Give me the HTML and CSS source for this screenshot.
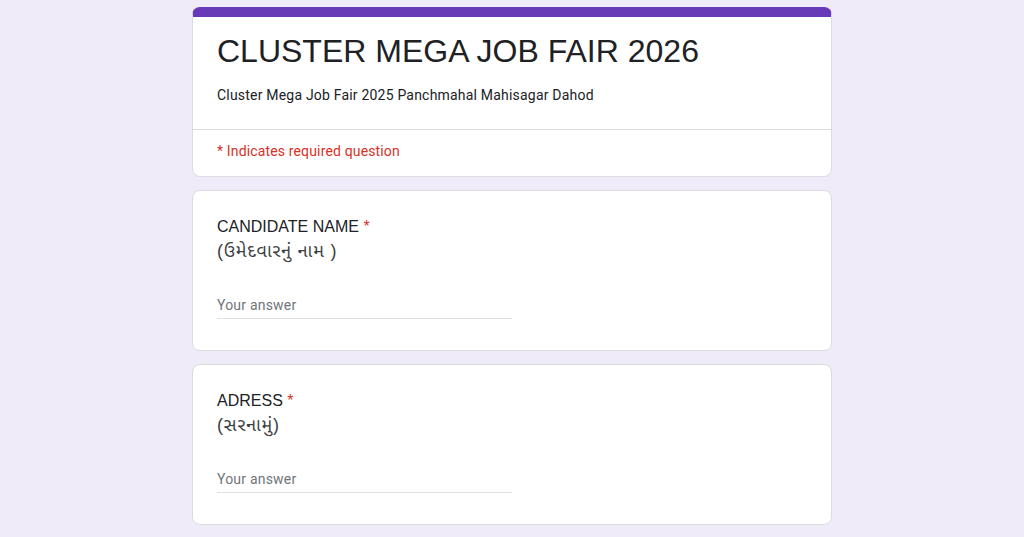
FILE: index.html
```html
<!DOCTYPE html>
<html lang="gu">
<head>
<meta charset="utf-8">
<title>CLUSTER MEGA JOB FAIR 2026</title>
<link rel="stylesheet" href="styles.css">
</head>
<body>
<main class="form">
  <section class="card header-card">
    <div class="header-main">
      <h1 class="form-title">CLUSTER MEGA JOB FAIR 2026</h1>
      <p class="form-desc">Cluster Mega Job Fair 2025 Panchmahal Mahisagar Dahod</p>
    </div>
    <div class="header-note">* Indicates required question</div>
  </section>

  <section class="card question">
    <div class="q-title">
      <div>CANDIDATE NAME <span class="req">*</span></div>
      <div class="q-local">(ઉમેદવારનું નામ )</div>
    </div>
    <div class="answer"><span class="placeholder">Your answer</span></div>
  </section>

  <section class="card question">
    <div class="q-title">
      <div>ADRESS <span class="req">*</span></div>
      <div class="q-local">(સરનામું)</div>
    </div>
    <div class="answer"><span class="placeholder">Your answer</span></div>
  </section>
</main>
</body>
</html>
```

FILE: styles.css
```css
html, body {
  margin: 0;
  padding: 0;
}

body {
  background: #f0ebf8;
  color: #202124;
  font-family: Roboto, "Liberation Sans", "Noto Sans Gujarati", "Noto Sans", sans-serif;
  min-height: 100vh;
}

.form {
  width: 640px;
  margin: 0 auto;
  padding-top: 7px;
  display: flex;
  flex-direction: column;
  gap: 13px;
}

.card {
  background: #fff;
  border: 1px solid #dadce0;
  border-radius: 8px;
  box-sizing: border-box;
}

.header-card {
  border-top: 10px solid #673ab7;
  overflow: hidden;
}

.header-main {
  padding: 14px 24px 24px;
  border-bottom: 1px solid #dadce0;
}

.form-title {
  margin: 0;
  font-family: "Liberation Sans", Arial, sans-serif;
  font-weight: 400;
  font-size: 32px;
  line-height: 40px;
  color: #202124;
}

.form-desc {
  margin: 14px 0 0;
  font-size: 14px;
  line-height: 20px;
  letter-spacing: 0.2px;
  color: #202124;
}

.header-note {
  padding: 11px 24px 15px;
  font-size: 14px;
  line-height: 20px;
  letter-spacing: 0.15px;
  color: #d93025;
}

.question {
  padding: 24px 24px 31px;
}

.q-title {
  font-family: "Liberation Sans", Arial, "Noto Sans Gujarati", sans-serif;
  font-size: 16px;
  line-height: 24px;
  color: #202124;
}

.q-local {
  font-size: 18px;
  letter-spacing: 0.8px;
  color: #3c4043;
}

.req {
  color: #d93025;
}

.answer {
  width: 50%;
  margin-top: 32px;
  padding-bottom: 3px;
  border-bottom: 1px solid #e0e0e0;
  font-size: 14px;
  line-height: 20px;
  letter-spacing: 0.2px;
}

.placeholder {
  color: #70757a;
}
```
